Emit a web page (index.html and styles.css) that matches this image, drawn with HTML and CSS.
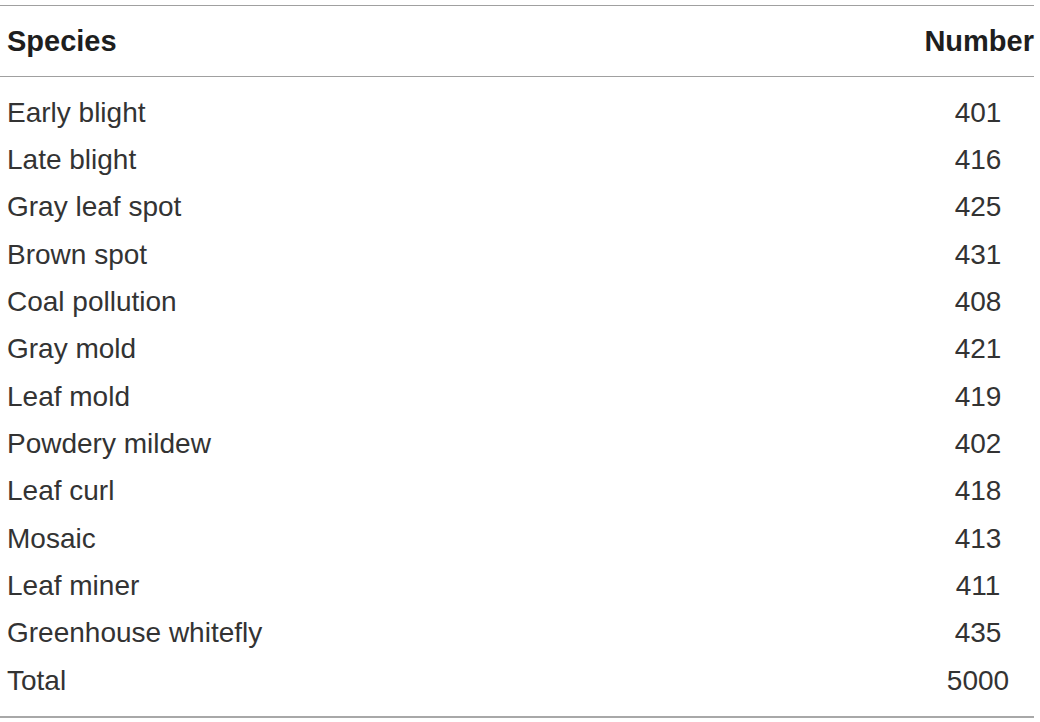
FILE: index.html
```html
<!DOCTYPE html>
<html>
<head>
<meta charset="utf-8">
<link rel="stylesheet" href="styles.css">
</head>
<body>
<div class="table">
  <div class="head">
    <div class="cell">Species</div>
    <div class="cell num-head">Number</div>
  </div>
  <div class="body">
    <div class="row"><div class="cell">Early blight</div><div class="cell num">401</div></div>
    <div class="row"><div class="cell">Late blight</div><div class="cell num">416</div></div>
    <div class="row"><div class="cell">Gray leaf spot</div><div class="cell num">425</div></div>
    <div class="row"><div class="cell">Brown spot</div><div class="cell num">431</div></div>
    <div class="row"><div class="cell">Coal pollution</div><div class="cell num">408</div></div>
    <div class="row"><div class="cell">Gray mold</div><div class="cell num">421</div></div>
    <div class="row"><div class="cell">Leaf mold</div><div class="cell num">419</div></div>
    <div class="row"><div class="cell">Powdery mildew</div><div class="cell num">402</div></div>
    <div class="row"><div class="cell">Leaf curl</div><div class="cell num">418</div></div>
    <div class="row"><div class="cell">Mosaic</div><div class="cell num">413</div></div>
    <div class="row"><div class="cell">Leaf miner</div><div class="cell num">411</div></div>
    <div class="row"><div class="cell">Greenhouse whitefly</div><div class="cell num">435</div></div>
    <div class="row"><div class="cell">Total</div><div class="cell num">5000</div></div>
  </div>
</div>
</body>
</html>
```
FILE: styles.css
```css
html, body {
  margin: 0;
  padding: 0;
  background: #ffffff;
}
body {
  font-family: "Liberation Sans", Arial, sans-serif;
  color: #333333;
}
.table {
  width: 1034px;
  margin-top: 5px;
  border-top: 1px solid #a0a0a0;
  border-bottom: 2px solid #a8a8a8;
}
.head, .row {
  display: grid;
  grid-template-columns: 1fr 112px;
  align-items: center;
}
.head {
  height: 70px;
  border-bottom: 1px solid #a0a0a0;
  font-weight: bold;
  font-size: 29px;
  color: #1e1e1e;
}
.body {
  padding: 12px 0 12px;
}
.row {
  height: 47.33px;
  font-size: 28px;
}
.cell {
  padding-left: 7px;
  white-space: nowrap;
}
.num-head {
  text-align: right;
  padding-left: 0;
}
.num {
  text-align: center;
  padding-left: 0;
}
```
